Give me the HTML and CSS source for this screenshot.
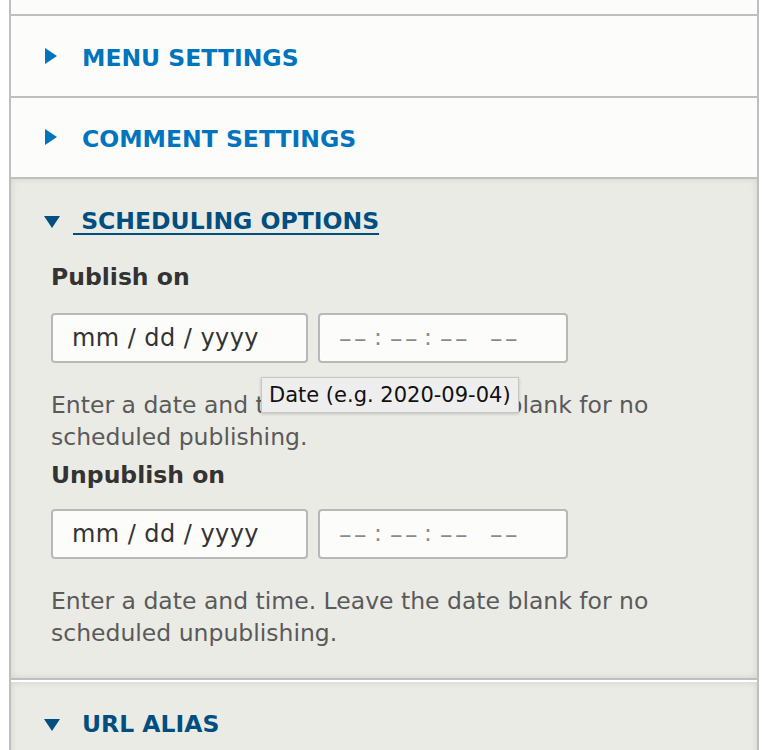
FILE: index.html
```html
<!DOCTYPE html>
<html lang="en">
<head>
<meta charset="utf-8">
<title>Scheduling options</title>
<link rel="stylesheet" href="styles.css">
</head>
<body>
<div class="details-list">
  <div class="details details--stub"></div>

  <div class="details">
    <div class="summary">
      <span class="arrow arrow--right"></span>
      <span class="summary__text">Menu settings</span>
    </div>
  </div>

  <div class="details">
    <div class="summary summary--short">
      <span class="arrow arrow--right"></span>
      <span class="summary__text">Comment settings</span>
    </div>
  </div>

  <div class="details details--open">
    <div class="summary summary--open">
      <span class="arrow arrow--down"></span>
      <span class="summary__text summary__text--active">&nbsp;Scheduling options</span>
    </div>
    <div class="pane">
      <div class="field">
        <div class="field__label">Publish on</div>
        <div class="inputs">
          <div class="input input--date">mm / dd / yyyy</div>
          <div class="input input--time">
            <span class="seg">––</span><span class="colon">:</span><span class="seg seg--2">––</span><span class="colon colon--2">:</span><span class="seg seg--3">––</span><span class="seg seg--ampm">––</span>
          </div>
          <div class="tooltip">Date (e.g. 2020-09-04)</div>
        </div>
        <div class="field__desc">Enter a date and time. Leave the date blank for no scheduled publishing.</div>
      </div>
      <div class="field field--second">
        <div class="field__label">Unpublish on</div>
        <div class="inputs inputs--second">
          <div class="input input--date">mm / dd / yyyy</div>
          <div class="input input--time">
            <span class="seg">––</span><span class="colon">:</span><span class="seg seg--2">––</span><span class="colon colon--2">:</span><span class="seg seg--3">––</span><span class="seg seg--ampm">––</span>
          </div>
        </div>
        <div class="field__desc">Enter a date and time. Leave the date blank for no scheduled unpublishing.</div>
      </div>
    </div>
  </div>

  <div class="details details--open details--last">
    <div class="summary summary--open">
      <span class="arrow arrow--down"></span>
      <span class="summary__text summary__text--dark">URL alias</span>
    </div>
  </div>
</div>
</body>
</html>
```

FILE: styles.css
```css
html, body {
  margin: 0;
  padding: 0;
  background: #ffffff;
}

body {
  font-family: "DejaVu Sans", Verdana, sans-serif;
  color: #333333;
}

.details-list {
  margin-left: 9px;
  width: 750px;
  box-sizing: border-box;
  border-left: 2px solid #bfbfbf;
  border-right: 2px solid #bfbfbf;
}

.details {
  background: #fcfcfa;
  border-bottom: 2px solid #bfbfbf;
}

.details--stub {
  height: 14px;
}

.details--open {
  background: #ebebe6;
  box-shadow: inset 0 0 7px rgba(0, 0, 0, 0.11);
}

.details--last {
  border-top: 2px solid #ffffff;
  border-bottom: none;
  height: 100px;
}

.summary {
  height: 80px;
  display: flex;
  align-items: center;
  padding-left: 34px;
  box-sizing: border-box;
}

.summary--short {
  height: 79px;
}

.summary--open {
  height: 80px;
  padding-left: 33px;
}

.arrow {
  display: block;
  width: 0;
  height: 0;
  flex: none;
}

.arrow--right {
  border-left: 12px solid #0074bd;
  border-top: 8px solid transparent;
  border-bottom: 8px solid transparent;
  margin-right: 25px;
  margin-bottom: 1px;
}

.arrow--down {
  border-top: 12px solid #004f80;
  border-left: 8px solid transparent;
  border-right: 8px solid transparent;
  margin-right: 13px;
  margin-top: 5px;
}

.summary__text {
  font-size: 23.5px;
  font-weight: bold;
  text-transform: uppercase;
  color: #0074bd;
  line-height: 1;
  margin-top: 5px;
}

.summary--open .summary__text {
  margin-top: 6px;
}

.summary__text--active {
  color: #004f80;
  text-decoration: underline;
  text-decoration-thickness: 2px;
  text-underline-offset: 4px;
}

.summary__text--dark {
  color: #004f80;
  margin-left: 9px;
}

.pane {
  padding: 0 40px 29px 40px;
}

.field__label {
  margin-top: 2px;
  font-size: 23.5px;
  font-weight: bold;
  line-height: 32px;
  color: #333333;
}

.field--second .field__label {
  margin-top: 6px;
}

.inputs {
  position: relative;
  display: flex;
  gap: 10px;
  margin-top: 20px;
}

.inputs--second {
  margin-top: 18px;
}

.input {
  height: 50px;
  box-sizing: border-box;
  border: 2px solid #b8b8b8;
  border-radius: 4px;
  background: #fcfcfa;
  display: flex;
  align-items: center;
  font-size: 24px;
  white-space: pre;
}

.input--date {
  width: 257px;
  padding-left: 19px;
  color: #333333;
  letter-spacing: 0.45px;
}

.input--time {
  width: 250px;
  padding-left: 19px;
  color: #8a8a8a;
  font-size: 23.5px;
}

.seg {
  display: block;
  width: 28px;
  font-size: 25px;
  letter-spacing: 2.5px;
  overflow: visible;
}

.colon {
  display: block;
  width: 8px;
  margin-left: 7px;
  margin-top: -2px;
}

.colon--2 {
  margin-left: 6px;
}

.seg--2,
.seg--3 {
  margin-left: 8px;
}

.seg--ampm {
  margin-left: 22px;
}

.tooltip {
  position: absolute;
  left: 210px;
  top: 64px;
  padding: 0 7px;
  height: 36px;
  box-sizing: border-box;
  display: flex;
  align-items: center;
  background: #eeeeee;
  border: 1px solid #c6c6c6;
  box-shadow: 0 1px 3px rgba(0, 0, 0, 0.18);
  font-size: 21px;
  color: #111111;
  white-space: nowrap;
  z-index: 2;
}

.field__desc {
  margin-top: 26px;
  font-size: 23.5px;
  line-height: 32px;
  color: #5a5a5a;
}
```
